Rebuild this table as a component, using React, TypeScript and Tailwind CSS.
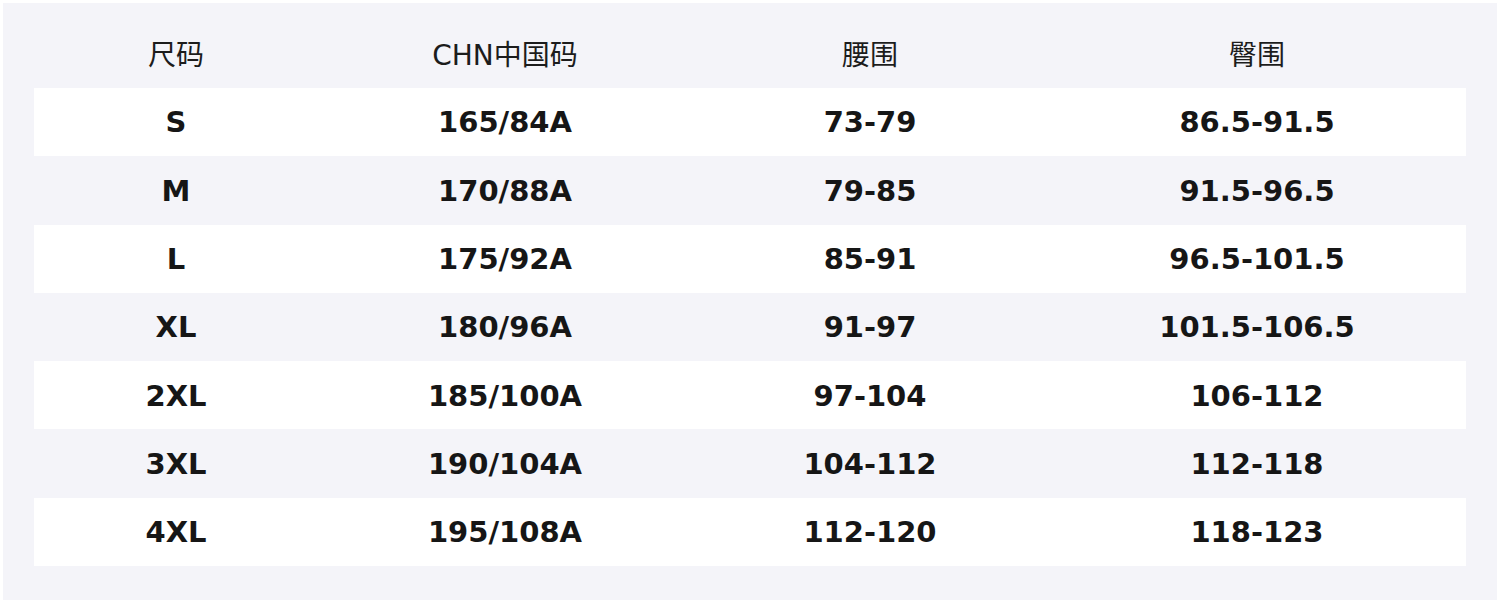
import React from 'react'

// size chart data
const rows = [
  ['S', '165/84A', '73-79', '86.5-91.5'],
  ['M', '170/88A', '79-85', '91.5-96.5'],
  ['L', '175/92A', '85-91', '96.5-101.5'],
  ['XL', '180/96A', '91-97', '101.5-106.5'],
  ['2XL', '185/100A', '97-104', '106-112'],
  ['3XL', '190/104A', '104-112', '112-118'],
  ['4XL', '195/108A', '112-120', '118-123'],
]

const headers = ['尺码', 'CHN中国码', '腰围', '臀围']

const font = {
  fontFamily: '"DejaVu Sans", "Noto Sans CJK SC", sans-serif',
}

export default function App() {
  return (
    <main className="w-[1500px] h-[603px] bg-white p-[3px]" style={font}>
      <div className="h-full bg-[#f4f4f9] px-[31px] pt-[17px]">

        {/* HEADER */}
        <div className="grid grid-cols-[284px_374px_356px_418px] h-[68px] items-center pt-[3px] text-[28px] text-[#1c1c1c]">
          {headers.map((h) => (
            <div key={h} className="text-center">
              {h}
            </div>
          ))}
        </div>

        {/* ROWS */}
        {rows.map((row, i) => (
          <div
            key={row[0]}
            className={
              'grid grid-cols-[284px_374px_356px_418px] h-[68.3px] items-center pt-[2px] text-[29px] font-bold text-[#161616] ' +
              (i % 2 === 0 ? 'bg-white' : 'bg-transparent')
            }
          >
            {row.map((cell, j) => (
              <div key={j} className="text-center">
                {cell}
              </div>
            ))}
          </div>
        ))}

      </div>
    </main>
  )
}
